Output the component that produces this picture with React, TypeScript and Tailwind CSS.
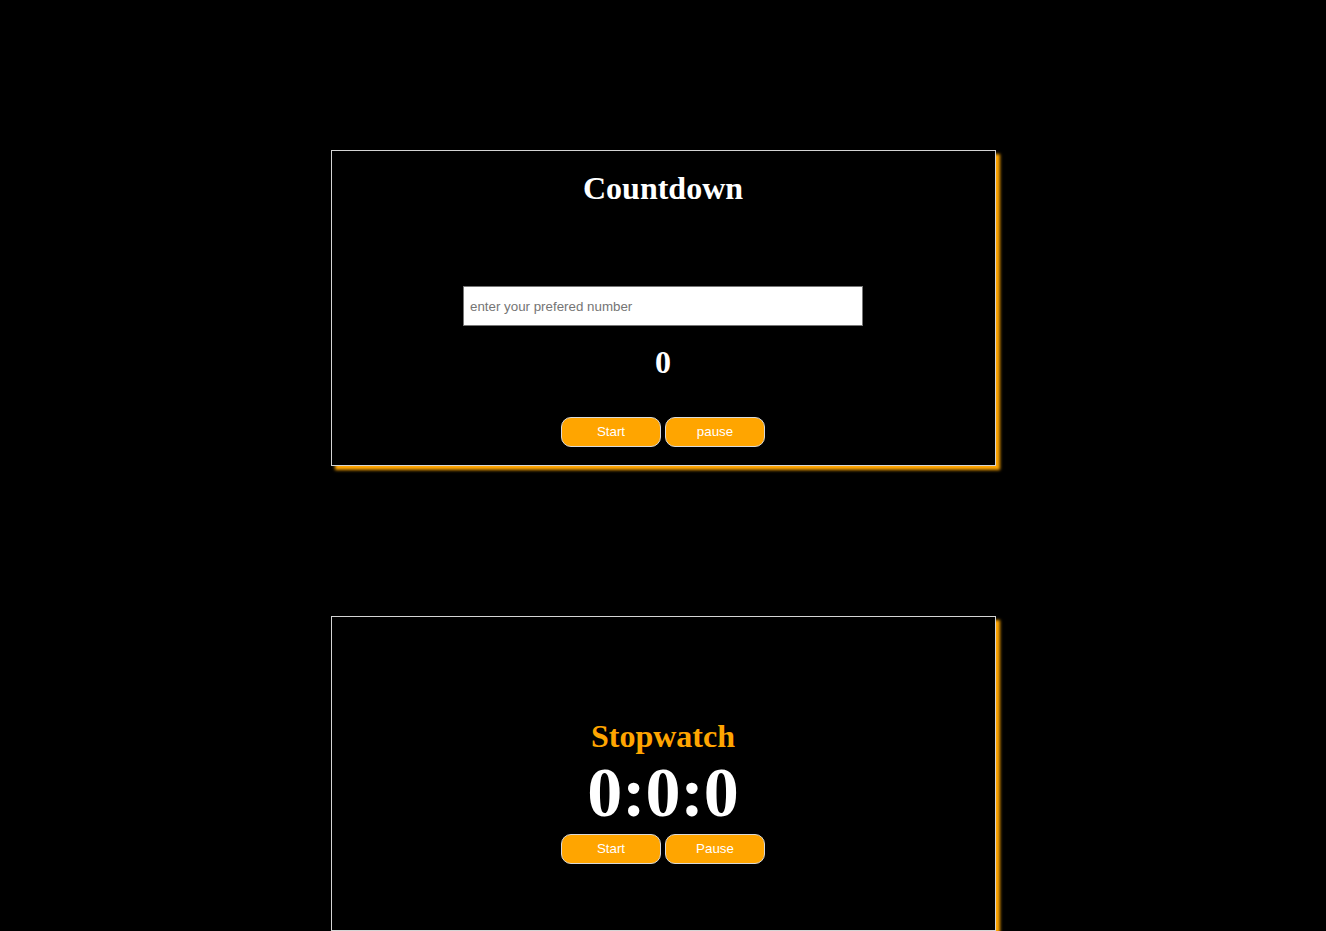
import React from "react";

const btn =
  "w-[100px] h-[30px] bg-[#ffa500] border border-[#d9d9d9] rounded-[10px] text-white text-[13.33px] font-['Liberation_Sans',Arial,sans-serif]";

export default function App() {
  return (
    <div className="min-h-[931px] bg-black pt-[150px] pb-[40px] font-['Liberation_Serif','Times_New_Roman',serif]">
      <div className="mx-auto w-[665px] border border-[#d4d4d4] shadow-[4px_4px_3px_#ffa500] flex flex-col items-center pb-[18px]">
        <h1 className="mt-[19px] text-[32px] leading-[37px] font-bold text-white">Countdown</h1>
        <input
          type="text"
          placeholder="enter your prefered number"
          className="mt-[79px] w-[400px] h-[40px] bg-white border border-[#767676] px-[6px] text-[13.33px] text-black placeholder:text-[#757575] font-['Liberation_Sans',Arial,sans-serif] outline-none"
        />
        <h2 className="mt-[18px] text-[32px] leading-[37px] font-bold text-white">0</h2>
        <div className="mt-[36px] flex gap-[4px]">
          <button className={btn}>Start</button>
          <button className={btn}>pause</button>
        </div>
      </div>

      <div className="mx-auto mt-[150px] w-[665px] h-[315px] border border-[#d4d4d4] shadow-[4px_4px_3px_#ffa500] flex flex-col items-center pt-[101px]">
        <h2 className="text-[32px] leading-[37px] font-bold text-[#ffa500]">Stopwatch</h2>
        <div className="mt-[3px] text-[70px] leading-[70px] font-bold text-white">0:0:0</div>
        <div className="mt-[6px] flex gap-[4px]">
          <button className={btn}>Start</button>
          <button className={btn}>Pause</button>
        </div>
      </div>
    </div>
  );
}
